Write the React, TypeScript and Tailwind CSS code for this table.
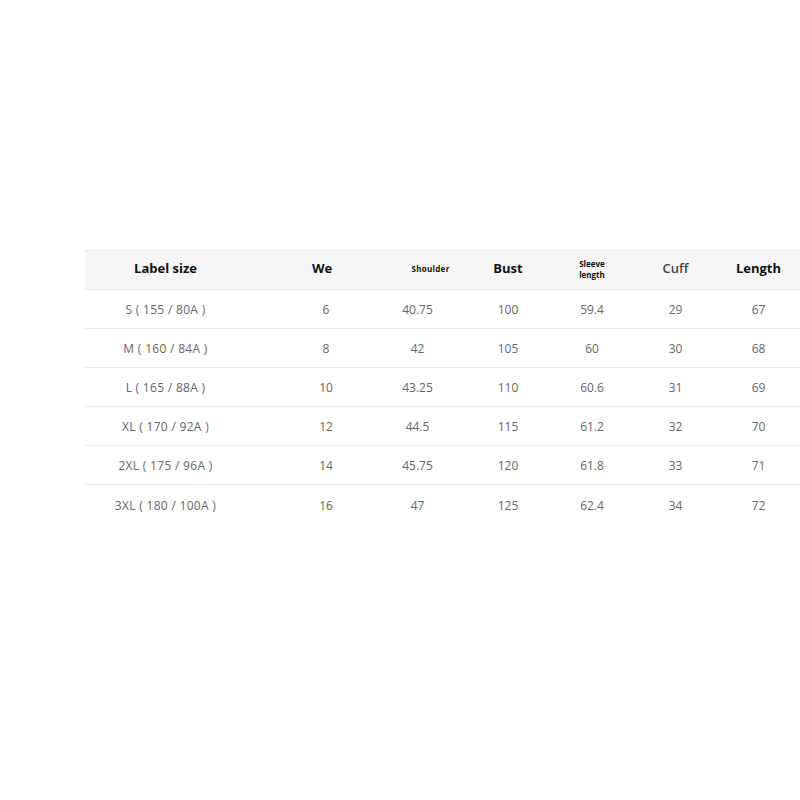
const rows = [
  ["S ( 155 / 80A )", "6", "40.75", "100", "59.4", "29", "67"],
  ["M ( 160 / 84A )", "8", "42", "105", "60", "30", "68"],
  ["L ( 165 / 88A )", "10", "43.25", "110", "60.6", "31", "69"],
  ["XL ( 170 / 92A )", "12", "44.5", "115", "61.2", "32", "70"],
  ["2XL ( 175 / 96A )", "14", "45.75", "120", "61.8", "33", "71"],
  ["3XL ( 180 / 100A )", "16", "47", "125", "62.4", "34", "72"],
];

// column boxes; padding shifts the centre where the source table is uneven
const cols = [
  "w-[161px]",
  "w-[126px] pl-[34px]",
  "w-[91px]",
  "w-[87px] pl-[3px]",
  "w-[84px]",
  "w-[83px]",
  "w-[83px]",
];

export default function App() {
  return (
    <div
      className="w-[800px] h-[800px] overflow-hidden bg-white"
      style={{ fontFamily: '"Open Sans", "Noto Sans", sans-serif' }}
    >
      <div className="pt-[250px] pl-[85px]">
        <div className="w-[730px]">
          <div className="flex h-[40px] items-center pb-[2px] border-y border-[#ebebeb] bg-[#f6f6f6] text-[#111]">
            <div className="w-[161px] flex justify-center text-[13px] font-bold">Label size</div>
            <div className="w-[126px] pl-[26px] flex justify-center text-[13px] font-bold">We</div>
            <div className="w-[91px] pl-[26px] flex justify-center text-[8px] font-bold tracking-[0.3px]">Shoulder</div>
            <div className="w-[87px] pl-[3px] flex justify-center text-[13px] font-bold">Bust</div>
            <div className="w-[84px] flex justify-center">
              <div className="text-[8px] font-bold leading-[11px] text-left">
                Sleeve
                <br />
                length
              </div>
            </div>
            <div className="w-[83px] flex justify-center text-[13px] font-semibold text-[#444]">Cuff</div>
            <div className="w-[83px] flex justify-center text-[13px] font-bold">Length</div>
          </div>
          {rows.map((r, i) => (
            <div
              key={r[0]}
              className={
                "flex h-[39px] items-center pt-[2px] text-[12px] text-[#666] " +
                (i < rows.length - 1 ? "border-b border-[#ececec]" : "")
              }
            >
              {r.map((v, j) => (
                <div key={j} className={cols[j] + " flex justify-center" + (j === 0 ? " tracking-[0.3px]" : "")}>
                  {v}
                </div>
              ))}
            </div>
          ))}
        </div>
      </div>
    </div>
  );
}
